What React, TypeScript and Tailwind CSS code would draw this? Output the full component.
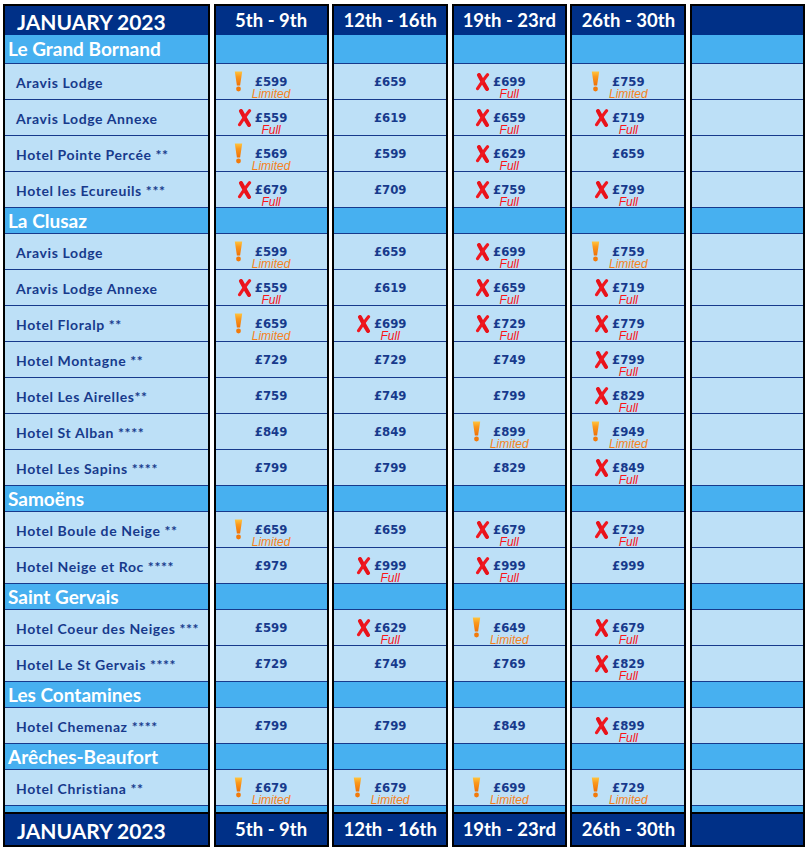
import React from "react";

type Status = "ok" | "limited" | "full";
type Price = [Status, number];

interface Hotel {
  name: string;
  prices: Price[];
}

interface Region {
  name: string;
  hotels: Hotel[];
}

const L = (n: number): Price => ["limited", n];
const F = (n: number): Price => ["full", n];
const O = (n: number): Price => ["ok", n];

const regions: Region[] = [
  {
    name: "Le Grand Bornand",
    hotels: [
      { name: "Aravis Lodge", prices: [L(599), O(659), F(699), L(759)] },
      { name: "Aravis Lodge Annexe", prices: [F(559), O(619), F(659), F(719)] },
      { name: "Hotel Pointe Percée **", prices: [L(569), O(599), F(629), O(659)] },
      { name: "Hotel les Ecureuils ***", prices: [F(679), O(709), F(759), F(799)] },
    ],
  },
  {
    name: "La Clusaz",
    hotels: [
      { name: "Aravis Lodge", prices: [L(599), O(659), F(699), L(759)] },
      { name: "Aravis Lodge Annexe", prices: [F(559), O(619), F(659), F(719)] },
      { name: "Hotel Floralp **", prices: [L(659), F(699), F(729), F(779)] },
      { name: "Hotel Montagne **", prices: [O(729), O(729), O(749), F(799)] },
      { name: "Hotel Les Airelles**", prices: [O(759), O(749), O(799), F(829)] },
      { name: "Hotel St Alban ****", prices: [O(849), O(849), L(899), L(949)] },
      { name: "Hotel Les Sapins ****", prices: [O(799), O(799), O(829), F(849)] },
    ],
  },
  {
    name: "Samoëns",
    hotels: [
      { name: "Hotel Boule de Neige **", prices: [L(659), O(659), F(679), F(729)] },
      { name: "Hotel Neige et Roc ****", prices: [O(979), F(999), F(999), O(999)] },
    ],
  },
  {
    name: "Saint Gervais",
    hotels: [
      { name: "Hotel Coeur des Neiges ***", prices: [O(599), F(629), L(649), F(679)] },
      { name: "Hotel Le St Gervais ****", prices: [O(729), O(749), O(769), F(829)] },
    ],
  },
  {
    name: "Les Contamines",
    hotels: [{ name: "Hotel Chemenaz ****", prices: [O(799), O(799), O(849), F(899)] }],
  },
  {
    name: "Arêches-Beaufort",
    hotels: [{ name: "Hotel Christiana **", prices: [L(679), L(679), L(699), L(729)] }],
  },
];

const weeks = ["5th - 9th", "12th - 16th", "19th - 23rd", "26th - 30th"];

const ROW = "grid grid-cols-[207px_115px_116px_115px_116px_115px] gap-x-[3.6px]";
const LINE = "shadow-[inset_0_-1px_0_#173a8c]";
const HEAD_FONT = "font-['Lato','Liberation_Sans',sans-serif]";
const PRICE_FONT = "font-['DejaVu_Sans_Condensed','DejaVu_Sans',sans-serif]";
const LABEL_FONT = "font-['Liberation_Sans','Arial',sans-serif]";

function Warning() {
  return (
    <svg width="9" height="21" viewBox="0 0 9 21">
      <defs>
        <linearGradient id="warn" x1="0" y1="0" x2="0" y2="1">
          <stop offset="0" stopColor="#ffc43d" />
          <stop offset="0.35" stopColor="#fb9a1c" />
          <stop offset="1" stopColor="#ef6f06" />
        </linearGradient>
      </defs>
      <path d="M0.8 0.6 H8.2 L6.1 14.6 H2.9 Z" fill="url(#warn)" />
      <circle cx="4.5" cy="18" r="2.4" fill="#f27a0a" />
    </svg>
  );
}

function Cross() {
  return (
    <svg width="15" height="18" viewBox="0 0 15 18">
      <path
        d="M4 2 C6 6 9 11 12 16"
        stroke="#e8121a"
        strokeWidth="4"
        strokeLinecap="round"
        fill="none"
      />
      <path
        d="M12.5 1.8 C9 6 6 10.5 2.6 15.6"
        stroke="#f01820"
        strokeWidth="3.2"
        strokeLinecap="round"
        fill="none"
      />
    </svg>
  );
}

function PriceCell({ price }: { price: Price }) {
  const [status, amount] = price;
  return (
    <div
      className={`h-[36px] border-x-2 border-black bg-[#bde0f7] ${LINE} grid grid-cols-[1fr_auto_1fr] grid-rows-[1fr_auto_1fr]`}
    >
      {status !== "ok" && (
        <div
          className={`col-start-1 row-start-1 row-span-3 self-center justify-self-end flex pb-[1px] ${
            status === "limited" ? "mr-[9px]" : "mr-[3px]"
          }`}
        >
          {status === "limited" ? <Warning /> : <Cross />}
        </div>
      )}
      <div
        className={`col-start-2 row-start-2 justify-self-center ${PRICE_FONT} font-bold text-[13px] leading-[12px] text-[#173a8c]`}
      >
        £{amount}
      </div>
      {status !== "ok" && (
        <div
          className={`col-start-2 row-start-3 self-start justify-self-center mt-[1px] ${LABEL_FONT} italic text-[12px] leading-[11px] ${
            status === "limited" ? "text-[#f5821c]" : "text-[#fa1418]"
          }`}
        >
          {status === "limited" ? "Limited" : "Full"}
        </div>
      )}
    </div>
  );
}

function HeaderRow({ top }: { top: boolean }) {
  const edge = top ? "h-[31px] border-t-2" : "h-[35px] border-y-2";
  return (
    <div className={ROW}>
      <div
        className={`${edge} border-x-2 border-black bg-[#003087] flex items-center pl-[12px] pt-[2px] ${HEAD_FONT} font-bold text-white text-[21px]`}
      >
        JANUARY 2023
      </div>
      {weeks.map((w) => (
        <div
          key={w}
          className={`${edge} border-x-2 border-black bg-[#003087] flex items-center justify-center pt-[1px] ${HEAD_FONT} font-bold text-white text-[18.5px]`}
        >
          {w}
        </div>
      ))}
      <div className={`${edge} border-x-2 border-black bg-[#003087]`} />
    </div>
  );
}

function RegionRow({ name, first }: { name: string; first: boolean }) {
  const h = first ? "h-[29px]" : "h-[26px]";
  return (
    <div className={ROW}>
      <div
        className={`${h} border-x-2 border-black bg-[#47b0f0] ${LINE} flex items-center pl-[3px] ${HEAD_FONT} font-bold text-white text-[19px]`}
      >
        {name}
      </div>
      {[0, 1, 2, 3, 4].map((i) => (
        <div key={i} className={`${h} border-x-2 border-black bg-[#47b0f0] ${LINE}`} />
      ))}
    </div>
  );
}

function HotelRow({ hotel }: { hotel: Hotel }) {
  return (
    <div className={ROW}>
      <div
        className={`h-[36px] border-x-2 border-black bg-[#bde0f7] ${LINE} flex items-center pl-[11px] ${HEAD_FONT} font-bold text-[14px] tracking-[0.6px] text-[#173a8c]`}
      >
        {hotel.name}
      </div>
      {hotel.prices.map((p, i) => (
        <PriceCell key={i} price={p} />
      ))}
      <div className={`h-[36px] border-x-2 border-black bg-[#bde0f7] ${LINE}`} />
    </div>
  );
}

export default function App() {
  return (
    <div className="w-[809px] h-[850px] overflow-hidden bg-white pt-[4px] pl-[3px]">
      <HeaderRow top />
      {regions.map((r, ri) => (
        <React.Fragment key={r.name}>
          <RegionRow name={r.name} first={ri === 0} />
          {r.hotels.map((h) => (
            <HotelRow key={h.name} hotel={h} />
          ))}
        </React.Fragment>
      ))}
      <div className={ROW}>
        {[0, 1, 2, 3, 4, 5].map((i) => (
          <div key={i} className="h-[6px] border-x-2 border-black bg-[#47b0f0]" />
        ))}
      </div>
      <HeaderRow top={false} />
    </div>
  );
}
